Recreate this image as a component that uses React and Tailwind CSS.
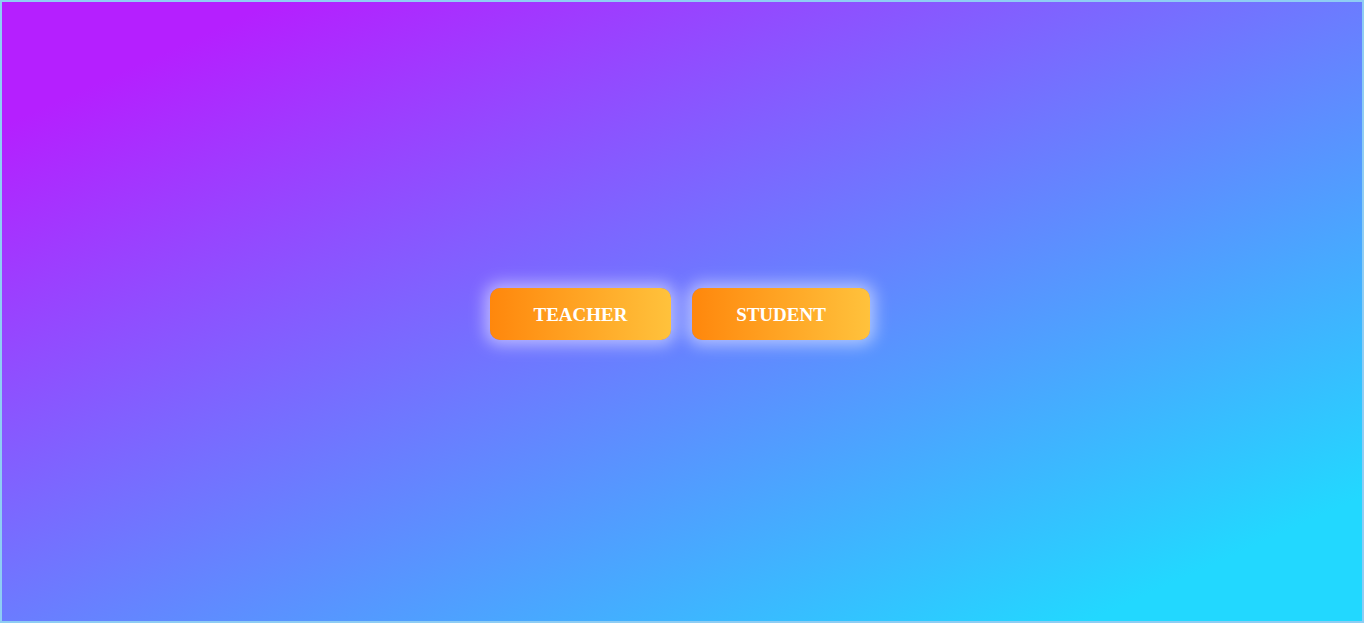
import React from "react";

export default function App() {
  return (
    <div className="h-screen w-full border-2 border-[#8ecdf4] bg-[linear-gradient(to_bottom_right,#b51fff_10%,#22d8ff_90%)] flex items-center justify-center">
      <div className="flex gap-[21px] pt-[5px] pr-[4px]">
        {/* Role buttons */}
        <button className="h-[52px] w-[181px] pt-[2px] rounded-[10px] bg-[linear-gradient(90deg,#ff870c,#ffc23c)] text-white font-bold text-[19px] font-['Liberation_Serif',serif] shadow-[0_0_16px_5px_rgba(255,255,255,0.5)]">
          TEACHER
        </button>
        <button className="h-[52px] w-[178px] pt-[2px] rounded-[10px] bg-[linear-gradient(90deg,#ff870c,#ffc23c)] text-white font-bold text-[19px] font-['Liberation_Serif',serif] shadow-[0_0_16px_5px_rgba(255,255,255,0.5)]">
          STUDENT
        </button>
      </div>
    </div>
  );
}
